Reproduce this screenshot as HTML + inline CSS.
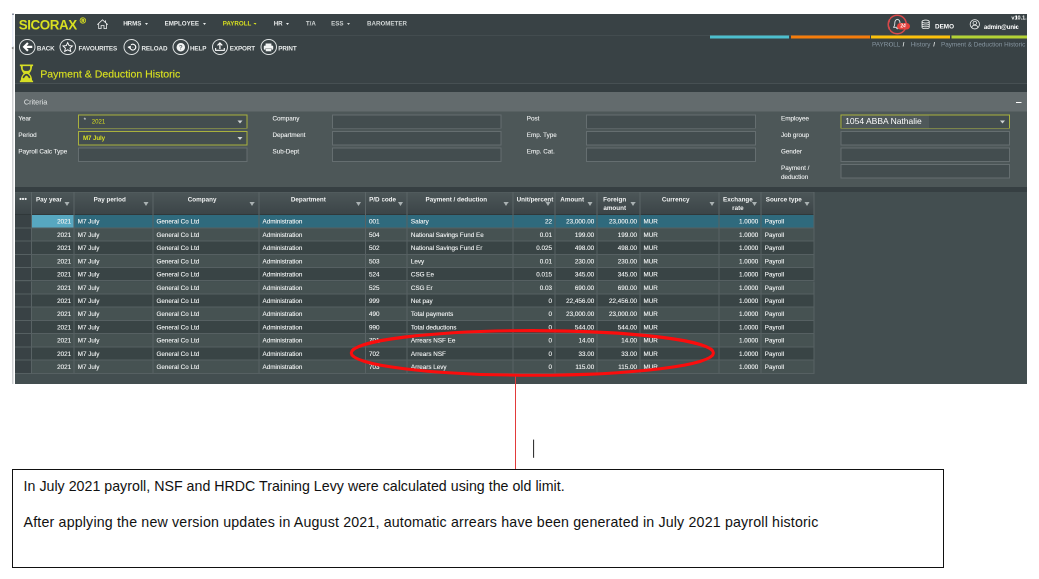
<!DOCTYPE html><html><head><meta charset="utf-8"><title>Payment &amp; Deduction Historic</title><style>
*{box-sizing:border-box;margin:0;padding:0}
html,body{width:1039px;height:579px;background:#fff;overflow:hidden}
body{position:relative;font-family:"Liberation Sans",Arial,sans-serif;color:#f2f4f4;-webkit-font-smoothing:antialiased}
.a{position:absolute}
.t{position:absolute;white-space:nowrap;line-height:1}
.nav{font-weight:bold;color:#e9ecec}
.tb{font-weight:bold;color:#e9ecec;letter-spacing:-0.12px}
.lbl{font-size:6.3px;color:#eef0f0;-webkit-text-stroke:0.12px #eef0f0}
.inp{position:absolute;height:14.2px;width:169.6px;background:#434d4f;border:1px solid #656e70}
.inp.y{border-color:#a9b13d}
.hc{position:absolute;top:191.9px;height:23.2px;background:linear-gradient(#566062 0,#4c5658 5%,#3c4548 95%,#30383a 97%,#30383a 100%);border-right:1px solid #5b6567}
.hc span{position:absolute;left:0;right:7.4px;top:3.55px;text-align:center;font-size:6.3px;font-weight:bold;line-height:8.7px;color:#f1f3f3}
.fl{position:absolute;width:0;height:0;border-left:2.5px solid transparent;border-right:2.5px solid transparent;border-top:4.3px solid #aab2b3}
.c{position:absolute;height:13.23px;font-size:6.3px;line-height:13.5px;white-space:nowrap;overflow:hidden;border-right:1px solid #586264;border-bottom:1px solid #566062;-webkit-text-stroke:0.12px #f4f6f6;padding:0 3.2px;color:#f4f6f6}
.r{text-align:right;padding-right:2.3px}
</style></head><body><div id="sc" style="position:absolute;left:0;top:0;width:2078px;height:1158px;transform:scale(.5);transform-origin:0 0;will-change:transform"><div style="zoom:2;position:absolute;left:0;top:0;width:1039px;height:579px">
<div class="a" style="left:12px;top:48px;width:1.5px;height:335.5px;background:#cfd1d3"></div>
<div class="a" style="left:12.2px;top:14px;width:1.3px;height:34px;background:#e6ebf5"></div>
<div class="a" style="left:11.8px;top:13.6px;width:2.4px;height:1.2px;background:#8c93a0"></div>
<div class="a" style="left:11.6px;top:46.4px;width:0;height:0;border-top:1.6px solid transparent;border-bottom:1.6px solid transparent;border-right:2.2px solid #777"></div>
<div class="a" style="left:15px;top:14px;width:1012px;height:369.4px;background:#394245"></div>
<div class="a" style="left:15px;top:35px;width:1012px;height:0.8px;background:#434c4f"></div>
<div class="a" style="left:15px;top:83px;width:1012px;height:0.9px;background:#475053"></div>
<div class="a" style="left:15px;top:83.9px;width:1012px;height:8.1px;background:#353e41"></div>
<div class="a" style="left:15px;top:91.9px;width:1012px;height:19.6px;background:#636b6d"></div>
<div class="a" style="left:15px;top:111.5px;width:1012px;height:75.6px;background:#4d5758"></div>
<div class="a" style="left:15px;top:187.1px;width:1012px;height:4.8px;background:#363f42"></div>
<div class="a" style="left:15px;top:191.9px;width:1012px;height:191.5px;background:#434e50"></div>
<div class="t" style="left:18.8px;top:18.35px;font-size:13.4px;font-weight:bold;color:#d9e021;letter-spacing:-0.45px">SICORAX</div>
<div class="t" style="left:79.7px;top:16.40px;font-size:8.5px;font-weight:bold;color:#d9e021;-webkit-text-stroke:0.25px #d9e021">®</div>
<svg class="a" style="left:0;top:0" width="130" height="36" viewBox="0 0 130 36"><path d="M97.3 24.7 L102.5 19.8 L107.8 24.7 M98.7 23.9 V28.6 H101.1 V25.5 H104 V28.6 H106.4 V23.9 M105.6 20.4 V22.4" fill="none" stroke="#eef0f0" stroke-width="0.8" stroke-linejoin="miter"/></svg>
<div class="t nav" style="left:123.2px;top:20.65px;font-size:6.2px;">HRMS</div>
<div class="a" style="left:145.0px;top:22.9px;width:0;height:0;border-left:1.7px solid transparent;border-right:1.7px solid transparent;border-top:2px solid #e9ecec"></div>
<div class="t nav" style="left:164.6px;top:20.65px;font-size:6.2px;">EMPLOYEE</div>
<div class="a" style="left:202.79999999999998px;top:22.9px;width:0;height:0;border-left:1.7px solid transparent;border-right:1.7px solid transparent;border-top:2px solid #e9ecec"></div>
<div class="t nav" style="left:222.7px;top:20.65px;font-size:6.2px;color:#d9e021;">PAYROLL</div>
<div class="a" style="left:253.7px;top:22.9px;width:0;height:0;border-left:1.7px solid transparent;border-right:1.7px solid transparent;border-top:2px solid #d9e021"></div>
<div class="t nav" style="left:273.7px;top:20.65px;font-size:6.2px;">HR</div>
<div class="a" style="left:285.9px;top:22.9px;width:0;height:0;border-left:1.7px solid transparent;border-right:1.7px solid transparent;border-top:2px solid #e9ecec"></div>
<div class="t nav" style="left:305.9px;top:20.65px;font-size:6.2px;color:#ced3d3;">T/A</div>
<div class="t nav" style="left:331.1px;top:20.65px;font-size:6.2px;color:#ced3d3;">ESS</div>
<div class="a" style="left:347.0px;top:22.9px;width:0;height:0;border-left:1.7px solid transparent;border-right:1.7px solid transparent;border-top:2px solid #ced3d3"></div>
<div class="t nav" style="left:367px;top:20.65px;font-size:6.2px;color:#ced3d3;">BAROMETER</div>
<svg class="a" style="left:880px;top:10px" width="40" height="26" viewBox="880 10 40 26"><path d="M897.4 19.3 C895.6 19.7 894.8 21.3 894.8 23 C894.8 25.6 894.3 26.4 893.5 27.3 H901.3 C900.5 26.4 900 25.6 900 23 C900 21.3 899.2 19.7 897.4 19.3 Z M896.5 28.1 A0.95 0.95 0 0 0 898.3 28.1" fill="none" stroke="#e2e6e6" stroke-width="0.9" stroke-linejoin="round"/></svg>
<div class="a" style="left:897.1px;top:22.8px;width:13.1px;height:6.8px;border-radius:3.4px;background:#e83f39"></div>
<div class="t" style="left:900.4px;top:23.7px;font-size:5px;font-weight:bold;color:#fff">24</div>
<div class="a" style="left:887.4px;top:14.6px;width:19.8px;height:19.8px;border-radius:50%;border:1.8px solid #d8494b"></div>
<svg class="a" style="left:920.8px;top:19.3px" width="9.3" height="9.8" viewBox="0 0 18 20" preserveAspectRatio="none"><ellipse cx="9" cy="4.2" rx="7" ry="3" fill="none" stroke="#eef0f0" stroke-width="1.7"/><path d="M2 4.2 V15.8 C2 17.6 5 18.8 9 18.8 C13 18.8 16 17.6 16 15.8 V4.2 M2 8.2 C2 10 5 11.2 9 11.2 C13 11.2 16 10 16 8.2 M2 12 C2 13.8 5 15 9 15 C13 15 16 13.8 16 12" fill="none" stroke="#eef0f0" stroke-width="1.7"/></svg>
<div class="t" style="left:935px;top:23.72px;font-size:6.35px;font-weight:bold;color:#fff">DEMO</div>
<svg class="a" style="left:969.3px;top:19.2px" width="10.6" height="10.6" viewBox="0 0 20 20"><circle cx="10" cy="10" r="8.8" fill="none" stroke="#eef0f0" stroke-width="1.5"/><circle cx="10" cy="7.6" r="3.3" fill="none" stroke="#eef0f0" stroke-width="1.5"/><path d="M4.2 16 C5 12.5 7.5 11.8 10 11.8 C12.5 11.8 15 12.5 15.8 16" fill="none" stroke="#eef0f0" stroke-width="1.5"/></svg>
<div class="t" style="left:983.9px;top:23.83px;font-size:6.1px;font-weight:bold;color:#fff;letter-spacing:-0.17px">admin@unic</div>
<div class="t" style="left:1011.4px;top:15.09px;font-size:5.5px;font-weight:bold;color:#fff;width:15.6px;overflow:hidden">v10.1.6</div>
<div class="a" style="left:710px;top:35.5px;width:79.2px;height:3.1px;background:#4dbfce"></div>
<div class="a" style="left:790.8px;top:35.5px;width:79px;height:3.1px;background:#f57c0b"></div>
<div class="a" style="left:871.2px;top:35.5px;width:78.9px;height:3.1px;background:#fcc10b"></div>
<div class="a" style="left:951.5px;top:35.5px;width:75.5px;height:3.1px;background:#b3d235"></div>
<div class="t" style="left:872px;top:41.6px;font-size:6.35px;color:#8796a1">PAYROLL</div>
<div class="t" style="left:902.6px;top:41.6px;font-size:6.35px;color:#e8ebeb;font-weight:bold">/</div>
<div class="t" style="left:910.7px;top:41.6px;font-size:6.35px;color:#8796a1">History</div>
<div class="t" style="left:933.2px;top:41.6px;font-size:6.35px;color:#e8ebeb;font-weight:bold">/</div>
<div class="t" style="left:941px;top:41.6px;font-size:6.35px;color:#8796a1">Payment &amp; Deduction Historic</div>
<div class="a" style="left:19.1px;top:38.8px;width:16.3px;height:16.3px;border-radius:50%;border:1.1px solid #dfe3e3"></div>
<div class="t tb" style="left:36.9px;top:45.51px;font-size:6.3px;">BACK</div>
<div class="a" style="left:59.6px;top:38.8px;width:16.3px;height:16.3px;border-radius:50%;border:1.1px solid #dfe3e3"></div>
<div class="t tb" style="left:78.5px;top:45.51px;font-size:6.3px;">FAVOURITES</div>
<div class="a" style="left:123.4px;top:38.8px;width:16.3px;height:16.3px;border-radius:50%;border:1.1px solid #dfe3e3"></div>
<div class="t tb" style="left:141.5px;top:45.51px;font-size:6.3px;">RELOAD</div>
<div class="a" style="left:172.6px;top:38.8px;width:16.3px;height:16.3px;border-radius:50%;border:1.1px solid #dfe3e3"></div>
<div class="t tb" style="left:190px;top:45.51px;font-size:6.3px;">HELP</div>
<div class="a" style="left:211.9px;top:38.8px;width:16.3px;height:16.3px;border-radius:50%;border:1.1px solid #dfe3e3"></div>
<div class="t tb" style="left:229.8px;top:45.51px;font-size:6.3px;">EXPORT</div>
<div class="a" style="left:260.5px;top:38.8px;width:16.3px;height:16.3px;border-radius:50%;border:1.1px solid #dfe3e3"></div>
<div class="t tb" style="left:278.3px;top:45.51px;font-size:6.3px;">PRINT</div>
<svg class="a" style="left:0;top:0" width="320" height="60" viewBox="0 0 320 60"><path d="M22.6 46.9 L27.2 42.3 L28.7 43.8 L26.7 45.8 H32.3 V48 H26.7 L28.7 50 L27.2 51.5 Z" fill="#fff"/><path d="M67.7 42.6 L69.1 45.6 L72.4 46 L70 48.2 L70.7 51.4 L67.7 49.8 L64.7 51.4 L65.4 48.2 L63 46 L66.3 45.6 Z" fill="none" stroke="#fff" stroke-width="0.95" stroke-linejoin="miter"/><path d="M130.0 47.6 A2.9 2.9 0 1 0 131.0 44.9" fill="none" stroke="#fff" stroke-width="1.15"/><path d="M127.1 47.0 L130.9 45.6 L130.5 49.3 Z" fill="#fff"/><circle cx="132.9" cy="47.3" r="0.6" fill="#8d9596"/><circle cx="180.8" cy="47.3" r="4.25" fill="#f1f3f3"/><text x="180.8" y="49.6" font-size="6.2" font-weight="bold" text-anchor="middle" fill="#5b6467" font-family="Liberation Sans, sans-serif">?</text><path d="M219.9 49 V43.4 M217.5 45.4 L219.9 43 L222.3 45.4" fill="none" stroke="#fff" stroke-width="1.2"/><path d="M215.6 48 V50.3 H224.3 V48" fill="none" stroke="#fff" stroke-width="1.1"/><rect x="265.6" y="43.5" width="5.8" height="2.4" fill="#f1f3f3"/><rect x="263.8" y="45.6" width="9.4" height="4.2" rx="0.9" fill="#f1f3f3"/><rect x="265.6" y="48.6" width="5.8" height="2.8" fill="#f1f3f3" stroke="#6a7275" stroke-width="0.5"/></svg>
<svg class="a" style="left:0;top:0" width="60" height="90" viewBox="0 0 60 90"><path d="M20.8 65.5 C20.8 70.2 22.3 71.6 23.6 73.4 C22.3 75.2 20.8 76.6 20.8 81.3 H32.1 C32.1 76.6 30.6 75.2 29.3 73.4 C30.6 71.6 32.1 70.2 32.1 65.5 Z" fill="#d6de25"/><rect x="19.85" y="64.5" width="13.25" height="1.65" fill="#d6de25"/><rect x="19.85" y="80.6" width="13.25" height="1.6" fill="#d6de25"/><path d="M22.75 66.15 V68.2 C22.75 70 24.3 70.9 25.6 70.9 H27.3 C28.6 70.9 30.15 70 30.15 68.2 V66.15 Z" fill="#394245"/><path d="M23.5 77.3 Q26.45 72.2 29.4 77.3" fill="none" stroke="#394245" stroke-width="1.75" stroke-linecap="round"/></svg>
<div class="t" style="left:40.2px;top:68.36px;font-size:10.55px;color:#d9e021;-webkit-text-stroke:0.14px #d9e021">Payment &amp; Deduction Historic</div>
<div class="t" style="left:23.9px;top:98.4px;font-size:7.25px;color:#e6e9e9">Criteria</div>
<div class="a" style="left:1016px;top:101.8px;width:5.6px;height:1.3px;background:#fff"></div>
<div class="inp y" style="left:77.9px;top:114.5px"></div>
<div class="t lbl" style="left:18.4px;top:115.5px">Year</div>
<div class="inp y" style="left:77.9px;top:131.1px"></div>
<div class="t lbl" style="left:18.4px;top:132.1px">Period</div>
<div class="inp" style="left:77.9px;top:147.6px"></div>
<div class="t lbl" style="left:18.4px;top:148.6px">Payroll Calc Type</div>
<div class="inp" style="left:332px;top:114.5px"></div>
<div class="t lbl" style="left:272.5px;top:115.5px">Company</div>
<div class="inp" style="left:332px;top:131.1px"></div>
<div class="t lbl" style="left:272.5px;top:132.1px">Department</div>
<div class="inp" style="left:332px;top:147.6px"></div>
<div class="t lbl" style="left:272.5px;top:148.6px">Sub-Dept</div>
<div class="inp" style="left:586.2px;top:114.5px"></div>
<div class="t lbl" style="left:526.8px;top:115.5px">Post</div>
<div class="inp" style="left:586.2px;top:131.1px"></div>
<div class="t lbl" style="left:526.8px;top:132.1px">Emp. Type</div>
<div class="inp" style="left:586.2px;top:147.6px"></div>
<div class="t lbl" style="left:526.8px;top:148.6px">Emp. Cat.</div>
<div class="inp y" style="left:840.4px;top:114.5px"></div>
<div class="t lbl" style="left:781px;top:115.5px">Employee</div>
<div class="inp" style="left:840.4px;top:131.1px"></div>
<div class="t lbl" style="left:781px;top:132.1px">Job group</div>
<div class="inp" style="left:840.4px;top:147.6px"></div>
<div class="t lbl" style="left:781px;top:148.6px">Gender</div>
<div class="inp" style="left:840.4px;top:164.2px"></div>
<div class="t lbl" style="left:781px;top:164.1px;line-height:8.8px">Payment /<br>deduction</div>
<div class="t" style="left:83.6px;top:117.2px;font-size:6.3px;color:#eef0f0">*</div>
<div class="t" style="left:91.7px;top:118.6px;font-size:6.1px;color:#d9e021">2021</div>
<div class="t" style="left:83px;top:135.2px;font-size:6.2px;color:#d9e021;font-weight:bold;letter-spacing:-0.1px">M7 July</div>
<div class="a" style="left:237.6px;top:120.3px;width:0;height:0;border-left:2.5px solid transparent;border-right:2.5px solid transparent;border-top:3.2px solid #d2d6d6"></div>
<div class="a" style="left:237.6px;top:136.8px;width:0;height:0;border-left:2.5px solid transparent;border-right:2.5px solid transparent;border-top:3.2px solid #d2d6d6"></div>
<div class="a" style="left:999.8px;top:120.3px;width:0;height:0;border-left:2.5px solid transparent;border-right:2.5px solid transparent;border-top:3.2px solid #d2d6d6"></div>
<div class="a" style="left:842.6px;top:115.6px;width:86.6px;height:12px;background:#4f585a"></div>
<div class="t" style="left:845.2px;top:116.8px;font-size:8.5px;color:#fff">1054 ABBA Nathalie</div>
<div class="hc" style="left:15px;width:16.8px"><span style="right:0;left:0.3px;font-size:7.2px;letter-spacing:0.05px;top:3.35px">•••</span></div>
<div class="hc" style="left:31.8px;width:42.7px"><span>Pay year</span></div>
<div class="fl" style="left:64.7px;top:202.0px"></div>
<div class="hc" style="left:74.5px;width:78.80000000000001px"><span>Pay period</span></div>
<div class="fl" style="left:143.5px;top:202.0px"></div>
<div class="hc" style="left:153.3px;width:106.0px"><span>Company</span></div>
<div class="fl" style="left:249.5px;top:202.0px"></div>
<div class="hc" style="left:259.3px;width:106.5px"><span>Department</span></div>
<div class="fl" style="left:356.0px;top:202.0px"></div>
<div class="hc" style="left:365.8px;width:41.89999999999998px"><span>P/D code</span></div>
<div class="fl" style="left:397.9px;top:202.0px"></div>
<div class="hc" style="left:407.7px;width:105.69999999999999px"><span>Payment / deduction</span></div>
<div class="fl" style="left:503.59999999999997px;top:202.0px"></div>
<div class="hc" style="left:513.4px;width:41.89999999999998px"><span style="text-align:left;left:3.2px;right:auto">Unit/percent</span></div>
<div class="fl" style="left:545.5px;top:202.0px"></div>
<div class="hc" style="left:555.3px;width:42.200000000000045px"><span>Amount</span></div>
<div class="fl" style="left:587.7px;top:202.0px"></div>
<div class="hc" style="left:597.5px;width:42.799999999999955px"><span>Foreign<br>amount</span></div>
<div class="fl" style="left:630.5px;top:202.0px"></div>
<div class="hc" style="left:640.3px;width:79.10000000000002px"><span>Currency</span></div>
<div class="fl" style="left:709.6px;top:202.0px"></div>
<div class="hc" style="left:719.4px;width:42.200000000000045px"><span style="left:1.6px;right:5.8px">Exchange<br>rate</span></div>
<div class="fl" style="left:751.8000000000001px;top:202.0px"></div>
<div class="hc" style="left:761.6px;width:52.799999999999955px"><span>Source type</span></div>
<div class="fl" style="left:804.6px;top:202.0px"></div>
<div class="c" style="left:15px;top:215.10px;width:16.8px;background:#394245"></div>
<div class="c r" style="left:31.8px;top:215.10px;width:42.7px;background:#57a7c0">2021</div>
<div class="c" style="left:74.5px;top:215.10px;width:78.8px;background:#2f6a7d">M7 July</div>
<div class="c" style="left:153.3px;top:215.10px;width:106.0px;background:#2f6a7d">General Co Ltd</div>
<div class="c" style="left:259.3px;top:215.10px;width:106.5px;background:#2f6a7d">Administration</div>
<div class="c" style="left:365.8px;top:215.10px;width:41.9px;background:#2f6a7d">001</div>
<div class="c" style="left:407.7px;top:215.10px;width:105.7px;background:#2f6a7d">Salary</div>
<div class="c r" style="left:513.4px;top:215.10px;width:41.9px;background:#2f6a7d">22</div>
<div class="c r" style="left:555.3px;top:215.10px;width:42.2px;background:#2f6a7d">23,000.00</div>
<div class="c r" style="left:597.5px;top:215.10px;width:42.8px;background:#2f6a7d">23,000.00</div>
<div class="c" style="left:640.3px;top:215.10px;width:79.1px;background:#2f6a7d">MUR</div>
<div class="c r" style="left:719.4px;top:215.10px;width:42.2px;background:#2f6a7d">1.0000</div>
<div class="c" style="left:761.6px;top:215.10px;width:52.8px;background:#2f6a7d">Payroll</div>
<div class="c" style="left:15px;top:228.33px;width:16.8px;background:#394245"></div>
<div class="c r" style="left:31.8px;top:228.33px;width:42.7px;background:#465252">2021</div>
<div class="c" style="left:74.5px;top:228.33px;width:78.8px;background:#465252">M7 July</div>
<div class="c" style="left:153.3px;top:228.33px;width:106.0px;background:#465252">General Co Ltd</div>
<div class="c" style="left:259.3px;top:228.33px;width:106.5px;background:#465252">Administration</div>
<div class="c" style="left:365.8px;top:228.33px;width:41.9px;background:#465252">504</div>
<div class="c" style="left:407.7px;top:228.33px;width:105.7px;background:#465252">National Savings Fund Ee</div>
<div class="c r" style="left:513.4px;top:228.33px;width:41.9px;background:#465252">0.01</div>
<div class="c r" style="left:555.3px;top:228.33px;width:42.2px;background:#465252">199.00</div>
<div class="c r" style="left:597.5px;top:228.33px;width:42.8px;background:#465252">199.00</div>
<div class="c" style="left:640.3px;top:228.33px;width:79.1px;background:#465252">MUR</div>
<div class="c r" style="left:719.4px;top:228.33px;width:42.2px;background:#465252">1.0000</div>
<div class="c" style="left:761.6px;top:228.33px;width:52.8px;background:#465252">Payroll</div>
<div class="c" style="left:15px;top:241.56px;width:16.8px;background:#394245"></div>
<div class="c r" style="left:31.8px;top:241.56px;width:42.7px;background:#394445">2021</div>
<div class="c" style="left:74.5px;top:241.56px;width:78.8px;background:#394445">M7 July</div>
<div class="c" style="left:153.3px;top:241.56px;width:106.0px;background:#394445">General Co Ltd</div>
<div class="c" style="left:259.3px;top:241.56px;width:106.5px;background:#394445">Administration</div>
<div class="c" style="left:365.8px;top:241.56px;width:41.9px;background:#394445">502</div>
<div class="c" style="left:407.7px;top:241.56px;width:105.7px;background:#394445">National Savings Fund Er</div>
<div class="c r" style="left:513.4px;top:241.56px;width:41.9px;background:#394445">0.025</div>
<div class="c r" style="left:555.3px;top:241.56px;width:42.2px;background:#394445">498.00</div>
<div class="c r" style="left:597.5px;top:241.56px;width:42.8px;background:#394445">498.00</div>
<div class="c" style="left:640.3px;top:241.56px;width:79.1px;background:#394445">MUR</div>
<div class="c r" style="left:719.4px;top:241.56px;width:42.2px;background:#394445">1.0000</div>
<div class="c" style="left:761.6px;top:241.56px;width:52.8px;background:#394445">Payroll</div>
<div class="c" style="left:15px;top:254.79px;width:16.8px;background:#394245"></div>
<div class="c r" style="left:31.8px;top:254.79px;width:42.7px;background:#465252">2021</div>
<div class="c" style="left:74.5px;top:254.79px;width:78.8px;background:#465252">M7 July</div>
<div class="c" style="left:153.3px;top:254.79px;width:106.0px;background:#465252">General Co Ltd</div>
<div class="c" style="left:259.3px;top:254.79px;width:106.5px;background:#465252">Administration</div>
<div class="c" style="left:365.8px;top:254.79px;width:41.9px;background:#465252">503</div>
<div class="c" style="left:407.7px;top:254.79px;width:105.7px;background:#465252">Levy</div>
<div class="c r" style="left:513.4px;top:254.79px;width:41.9px;background:#465252">0.01</div>
<div class="c r" style="left:555.3px;top:254.79px;width:42.2px;background:#465252">230.00</div>
<div class="c r" style="left:597.5px;top:254.79px;width:42.8px;background:#465252">230.00</div>
<div class="c" style="left:640.3px;top:254.79px;width:79.1px;background:#465252">MUR</div>
<div class="c r" style="left:719.4px;top:254.79px;width:42.2px;background:#465252">1.0000</div>
<div class="c" style="left:761.6px;top:254.79px;width:52.8px;background:#465252">Payroll</div>
<div class="c" style="left:15px;top:268.02px;width:16.8px;background:#394245"></div>
<div class="c r" style="left:31.8px;top:268.02px;width:42.7px;background:#394445">2021</div>
<div class="c" style="left:74.5px;top:268.02px;width:78.8px;background:#394445">M7 July</div>
<div class="c" style="left:153.3px;top:268.02px;width:106.0px;background:#394445">General Co Ltd</div>
<div class="c" style="left:259.3px;top:268.02px;width:106.5px;background:#394445">Administration</div>
<div class="c" style="left:365.8px;top:268.02px;width:41.9px;background:#394445">524</div>
<div class="c" style="left:407.7px;top:268.02px;width:105.7px;background:#394445">CSG Ee</div>
<div class="c r" style="left:513.4px;top:268.02px;width:41.9px;background:#394445">0.015</div>
<div class="c r" style="left:555.3px;top:268.02px;width:42.2px;background:#394445">345.00</div>
<div class="c r" style="left:597.5px;top:268.02px;width:42.8px;background:#394445">345.00</div>
<div class="c" style="left:640.3px;top:268.02px;width:79.1px;background:#394445">MUR</div>
<div class="c r" style="left:719.4px;top:268.02px;width:42.2px;background:#394445">1.0000</div>
<div class="c" style="left:761.6px;top:268.02px;width:52.8px;background:#394445">Payroll</div>
<div class="c" style="left:15px;top:281.25px;width:16.8px;background:#394245"></div>
<div class="c r" style="left:31.8px;top:281.25px;width:42.7px;background:#465252">2021</div>
<div class="c" style="left:74.5px;top:281.25px;width:78.8px;background:#465252">M7 July</div>
<div class="c" style="left:153.3px;top:281.25px;width:106.0px;background:#465252">General Co Ltd</div>
<div class="c" style="left:259.3px;top:281.25px;width:106.5px;background:#465252">Administration</div>
<div class="c" style="left:365.8px;top:281.25px;width:41.9px;background:#465252">525</div>
<div class="c" style="left:407.7px;top:281.25px;width:105.7px;background:#465252">CSG Er</div>
<div class="c r" style="left:513.4px;top:281.25px;width:41.9px;background:#465252">0.03</div>
<div class="c r" style="left:555.3px;top:281.25px;width:42.2px;background:#465252">690.00</div>
<div class="c r" style="left:597.5px;top:281.25px;width:42.8px;background:#465252">690.00</div>
<div class="c" style="left:640.3px;top:281.25px;width:79.1px;background:#465252">MUR</div>
<div class="c r" style="left:719.4px;top:281.25px;width:42.2px;background:#465252">1.0000</div>
<div class="c" style="left:761.6px;top:281.25px;width:52.8px;background:#465252">Payroll</div>
<div class="c" style="left:15px;top:294.48px;width:16.8px;background:#394245"></div>
<div class="c r" style="left:31.8px;top:294.48px;width:42.7px;background:#394445">2021</div>
<div class="c" style="left:74.5px;top:294.48px;width:78.8px;background:#394445">M7 July</div>
<div class="c" style="left:153.3px;top:294.48px;width:106.0px;background:#394445">General Co Ltd</div>
<div class="c" style="left:259.3px;top:294.48px;width:106.5px;background:#394445">Administration</div>
<div class="c" style="left:365.8px;top:294.48px;width:41.9px;background:#394445">999</div>
<div class="c" style="left:407.7px;top:294.48px;width:105.7px;background:#394445">Net pay</div>
<div class="c r" style="left:513.4px;top:294.48px;width:41.9px;background:#394445">0</div>
<div class="c r" style="left:555.3px;top:294.48px;width:42.2px;background:#394445">22,456.00</div>
<div class="c r" style="left:597.5px;top:294.48px;width:42.8px;background:#394445">22,456.00</div>
<div class="c" style="left:640.3px;top:294.48px;width:79.1px;background:#394445">MUR</div>
<div class="c r" style="left:719.4px;top:294.48px;width:42.2px;background:#394445">1.0000</div>
<div class="c" style="left:761.6px;top:294.48px;width:52.8px;background:#394445">Payroll</div>
<div class="c" style="left:15px;top:307.71px;width:16.8px;background:#394245"></div>
<div class="c r" style="left:31.8px;top:307.71px;width:42.7px;background:#465252">2021</div>
<div class="c" style="left:74.5px;top:307.71px;width:78.8px;background:#465252">M7 July</div>
<div class="c" style="left:153.3px;top:307.71px;width:106.0px;background:#465252">General Co Ltd</div>
<div class="c" style="left:259.3px;top:307.71px;width:106.5px;background:#465252">Administration</div>
<div class="c" style="left:365.8px;top:307.71px;width:41.9px;background:#465252">490</div>
<div class="c" style="left:407.7px;top:307.71px;width:105.7px;background:#465252">Total payments</div>
<div class="c r" style="left:513.4px;top:307.71px;width:41.9px;background:#465252">0</div>
<div class="c r" style="left:555.3px;top:307.71px;width:42.2px;background:#465252">23,000.00</div>
<div class="c r" style="left:597.5px;top:307.71px;width:42.8px;background:#465252">23,000.00</div>
<div class="c" style="left:640.3px;top:307.71px;width:79.1px;background:#465252">MUR</div>
<div class="c r" style="left:719.4px;top:307.71px;width:42.2px;background:#465252">1.0000</div>
<div class="c" style="left:761.6px;top:307.71px;width:52.8px;background:#465252">Payroll</div>
<div class="c" style="left:15px;top:320.94px;width:16.8px;background:#394245"></div>
<div class="c r" style="left:31.8px;top:320.94px;width:42.7px;background:#394445">2021</div>
<div class="c" style="left:74.5px;top:320.94px;width:78.8px;background:#394445">M7 July</div>
<div class="c" style="left:153.3px;top:320.94px;width:106.0px;background:#394445">General Co Ltd</div>
<div class="c" style="left:259.3px;top:320.94px;width:106.5px;background:#394445">Administration</div>
<div class="c" style="left:365.8px;top:320.94px;width:41.9px;background:#394445">990</div>
<div class="c" style="left:407.7px;top:320.94px;width:105.7px;background:#394445">Total deductions</div>
<div class="c r" style="left:513.4px;top:320.94px;width:41.9px;background:#394445">0</div>
<div class="c r" style="left:555.3px;top:320.94px;width:42.2px;background:#394445">544.00</div>
<div class="c r" style="left:597.5px;top:320.94px;width:42.8px;background:#394445">544.00</div>
<div class="c" style="left:640.3px;top:320.94px;width:79.1px;background:#394445">MUR</div>
<div class="c r" style="left:719.4px;top:320.94px;width:42.2px;background:#394445">1.0000</div>
<div class="c" style="left:761.6px;top:320.94px;width:52.8px;background:#394445">Payroll</div>
<div class="c" style="left:15px;top:334.17px;width:16.8px;background:#394245"></div>
<div class="c r" style="left:31.8px;top:334.17px;width:42.7px;background:#465252">2021</div>
<div class="c" style="left:74.5px;top:334.17px;width:78.8px;background:#465252">M7 July</div>
<div class="c" style="left:153.3px;top:334.17px;width:106.0px;background:#465252">General Co Ltd</div>
<div class="c" style="left:259.3px;top:334.17px;width:106.5px;background:#465252">Administration</div>
<div class="c" style="left:365.8px;top:334.17px;width:41.9px;background:#465252">701</div>
<div class="c" style="left:407.7px;top:334.17px;width:105.7px;background:#465252">Arrears NSF Ee</div>
<div class="c r" style="left:513.4px;top:334.17px;width:41.9px;background:#465252">0</div>
<div class="c r" style="left:555.3px;top:334.17px;width:42.2px;background:#465252">14.00</div>
<div class="c r" style="left:597.5px;top:334.17px;width:42.8px;background:#465252">14.00</div>
<div class="c" style="left:640.3px;top:334.17px;width:79.1px;background:#465252">MUR</div>
<div class="c r" style="left:719.4px;top:334.17px;width:42.2px;background:#465252">1.0000</div>
<div class="c" style="left:761.6px;top:334.17px;width:52.8px;background:#465252">Payroll</div>
<div class="c" style="left:15px;top:347.40px;width:16.8px;background:#394245"></div>
<div class="c r" style="left:31.8px;top:347.40px;width:42.7px;background:#394445">2021</div>
<div class="c" style="left:74.5px;top:347.40px;width:78.8px;background:#394445">M7 July</div>
<div class="c" style="left:153.3px;top:347.40px;width:106.0px;background:#394445">General Co Ltd</div>
<div class="c" style="left:259.3px;top:347.40px;width:106.5px;background:#394445">Administration</div>
<div class="c" style="left:365.8px;top:347.40px;width:41.9px;background:#394445">702</div>
<div class="c" style="left:407.7px;top:347.40px;width:105.7px;background:#394445">Arrears NSF</div>
<div class="c r" style="left:513.4px;top:347.40px;width:41.9px;background:#394445">0</div>
<div class="c r" style="left:555.3px;top:347.40px;width:42.2px;background:#394445">33.00</div>
<div class="c r" style="left:597.5px;top:347.40px;width:42.8px;background:#394445">33.00</div>
<div class="c" style="left:640.3px;top:347.40px;width:79.1px;background:#394445">MUR</div>
<div class="c r" style="left:719.4px;top:347.40px;width:42.2px;background:#394445">1.0000</div>
<div class="c" style="left:761.6px;top:347.40px;width:52.8px;background:#394445">Payroll</div>
<div class="c" style="left:15px;top:360.63px;width:16.8px;background:#394245"></div>
<div class="c r" style="left:31.8px;top:360.63px;width:42.7px;background:#465252">2021</div>
<div class="c" style="left:74.5px;top:360.63px;width:78.8px;background:#465252">M7 July</div>
<div class="c" style="left:153.3px;top:360.63px;width:106.0px;background:#465252">General Co Ltd</div>
<div class="c" style="left:259.3px;top:360.63px;width:106.5px;background:#465252">Administration</div>
<div class="c" style="left:365.8px;top:360.63px;width:41.9px;background:#465252">703</div>
<div class="c" style="left:407.7px;top:360.63px;width:105.7px;background:#465252">Arrears Levy</div>
<div class="c r" style="left:513.4px;top:360.63px;width:41.9px;background:#465252">0</div>
<div class="c r" style="left:555.3px;top:360.63px;width:42.2px;background:#465252">115.00</div>
<div class="c r" style="left:597.5px;top:360.63px;width:42.8px;background:#465252">115.00</div>
<div class="c" style="left:640.3px;top:360.63px;width:79.1px;background:#465252">MUR</div>
<div class="c r" style="left:719.4px;top:360.63px;width:42.2px;background:#465252">1.0000</div>
<div class="c" style="left:761.6px;top:360.63px;width:52.8px;background:#465252">Payroll</div>
</div></div>
<svg class="a" style="left:0;top:0" width="1039" height="579" viewBox="0 0 1039 579"><ellipse cx="532.35" cy="352.9" rx="181.1" ry="22.3" fill="none" stroke="#fb0d0d" stroke-width="3.1"/><line x1="515.5" y1="376.5" x2="515.5" y2="469" stroke="#e23a3a" stroke-width="1"/><line x1="533.6" y1="439.6" x2="533.6" y2="457.8" stroke="#222" stroke-width="1"/></svg>
<div class="a" style="left:12px;top:469px;width:932px;height:99px;border:1px solid #111;background:#fff"></div>
<div class="t" id="l1" style="left:23.6px;top:478.9px;font-size:14.2px;letter-spacing:0.02px;color:#111;">In July 2021 payroll, NSF and HRDC Training Levy were calculated using the old limit.</div>
<div class="t" id="l2" style="left:23.6px;top:515.0px;font-size:14.2px;letter-spacing:0.18px;color:#111;">After applying the new version updates in August 2021, automatic arrears have been generated in July 2021 payroll historic</div>
</body></html>
